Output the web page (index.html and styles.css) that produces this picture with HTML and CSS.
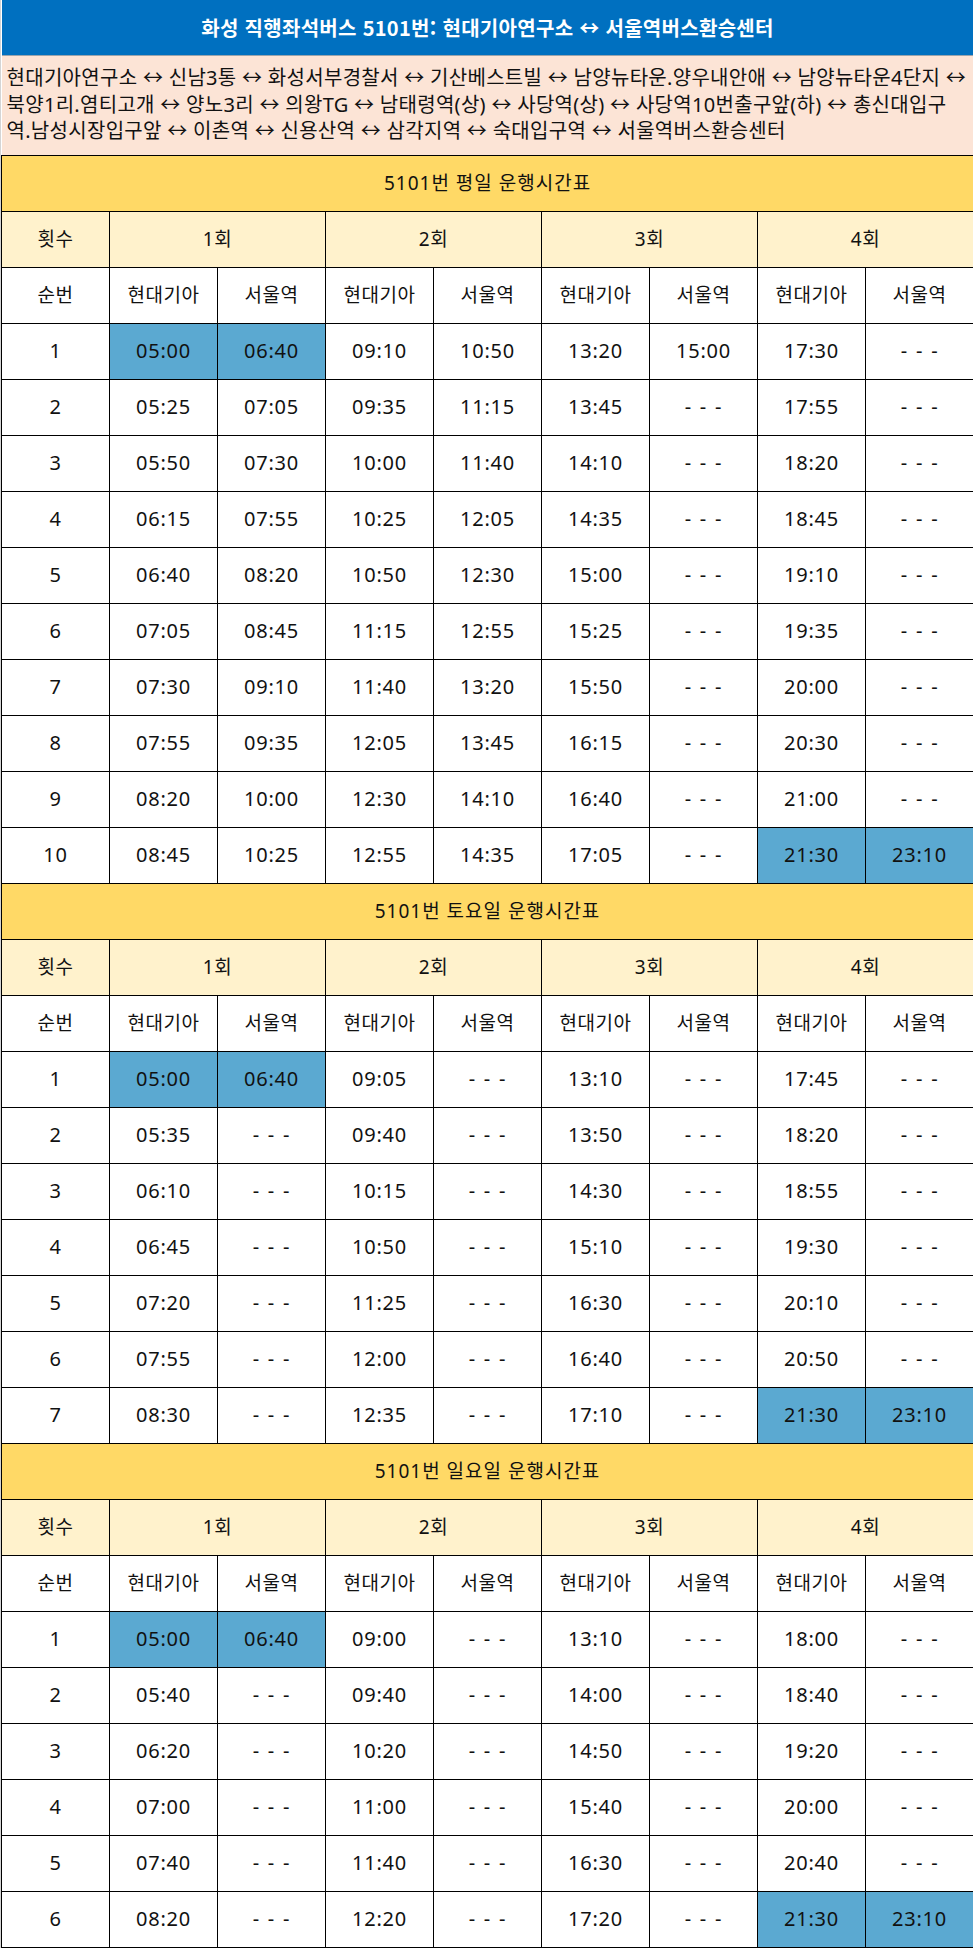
FILE: index.html
```html
<!DOCTYPE html>
<html lang="ko">
<head>
<meta charset="utf-8">
<title>화성 직행좌석버스 5101번</title>
<link rel="stylesheet" href="styles.css">
</head>
<body>
<div class="page">
<table class="tt">
<colgroup>
<col><col><col><col><col><col><col><col><col>
</colgroup>
<tbody>
<tr class="title-row"><td colspan="9">화성 직행좌석버스 5101번: 현대기아연구소 ↔ 서울역버스환승센터</td></tr>
<tr class="route-row"><td colspan="9">현대기아연구소 ↔ 신남3통 ↔ 화성서부경찰서 ↔ 기산베스트빌 ↔ 남양뉴타운.양우내안애 ↔ 남양뉴타운4단지 ↔ 북양1리.염티고개 ↔ 양노3리 ↔ 의왕TG ↔ 남태령역(상) ↔ 사당역(상) ↔ 사당역10번출구앞(하) ↔ 총신대입구역.남성시장입구앞 ↔ 이촌역 ↔ 신용산역 ↔ 삼각지역 ↔ 숙대입구역 ↔ 서울역버스환승센터</td></tr>

<tr class="sec"><td colspan="9">5101번 평일 운행시간표</td></tr>
<tr class="round"><td>횟수</td><td colspan="2">1회</td><td colspan="2">2회</td><td colspan="2">3회</td><td colspan="2">4회</td></tr>
<tr class="hdr"><td>순번</td><td>현대기아</td><td>서울역</td><td>현대기아</td><td>서울역</td><td>현대기아</td><td>서울역</td><td>현대기아</td><td>서울역</td></tr>
<tr><td>1</td><td class="hl">05:00</td><td class="hl">06:40</td><td>09:10</td><td>10:50</td><td>13:20</td><td>15:00</td><td>17:30</td><td>- - -</td></tr>
<tr><td>2</td><td>05:25</td><td>07:05</td><td>09:35</td><td>11:15</td><td>13:45</td><td>- - -</td><td>17:55</td><td>- - -</td></tr>
<tr><td>3</td><td>05:50</td><td>07:30</td><td>10:00</td><td>11:40</td><td>14:10</td><td>- - -</td><td>18:20</td><td>- - -</td></tr>
<tr><td>4</td><td>06:15</td><td>07:55</td><td>10:25</td><td>12:05</td><td>14:35</td><td>- - -</td><td>18:45</td><td>- - -</td></tr>
<tr><td>5</td><td>06:40</td><td>08:20</td><td>10:50</td><td>12:30</td><td>15:00</td><td>- - -</td><td>19:10</td><td>- - -</td></tr>
<tr><td>6</td><td>07:05</td><td>08:45</td><td>11:15</td><td>12:55</td><td>15:25</td><td>- - -</td><td>19:35</td><td>- - -</td></tr>
<tr><td>7</td><td>07:30</td><td>09:10</td><td>11:40</td><td>13:20</td><td>15:50</td><td>- - -</td><td>20:00</td><td>- - -</td></tr>
<tr><td>8</td><td>07:55</td><td>09:35</td><td>12:05</td><td>13:45</td><td>16:15</td><td>- - -</td><td>20:30</td><td>- - -</td></tr>
<tr><td>9</td><td>08:20</td><td>10:00</td><td>12:30</td><td>14:10</td><td>16:40</td><td>- - -</td><td>21:00</td><td>- - -</td></tr>
<tr><td>10</td><td>08:45</td><td>10:25</td><td>12:55</td><td>14:35</td><td>17:05</td><td>- - -</td><td class="hl">21:30</td><td class="hl">23:10</td></tr>

<tr class="sec"><td colspan="9">5101번 토요일 운행시간표</td></tr>
<tr class="round"><td>횟수</td><td colspan="2">1회</td><td colspan="2">2회</td><td colspan="2">3회</td><td colspan="2">4회</td></tr>
<tr class="hdr"><td>순번</td><td>현대기아</td><td>서울역</td><td>현대기아</td><td>서울역</td><td>현대기아</td><td>서울역</td><td>현대기아</td><td>서울역</td></tr>
<tr><td>1</td><td class="hl">05:00</td><td class="hl">06:40</td><td>09:05</td><td>- - -</td><td>13:10</td><td>- - -</td><td>17:45</td><td>- - -</td></tr>
<tr><td>2</td><td>05:35</td><td>- - -</td><td>09:40</td><td>- - -</td><td>13:50</td><td>- - -</td><td>18:20</td><td>- - -</td></tr>
<tr><td>3</td><td>06:10</td><td>- - -</td><td>10:15</td><td>- - -</td><td>14:30</td><td>- - -</td><td>18:55</td><td>- - -</td></tr>
<tr><td>4</td><td>06:45</td><td>- - -</td><td>10:50</td><td>- - -</td><td>15:10</td><td>- - -</td><td>19:30</td><td>- - -</td></tr>
<tr><td>5</td><td>07:20</td><td>- - -</td><td>11:25</td><td>- - -</td><td>16:30</td><td>- - -</td><td>20:10</td><td>- - -</td></tr>
<tr><td>6</td><td>07:55</td><td>- - -</td><td>12:00</td><td>- - -</td><td>16:40</td><td>- - -</td><td>20:50</td><td>- - -</td></tr>
<tr><td>7</td><td>08:30</td><td>- - -</td><td>12:35</td><td>- - -</td><td>17:10</td><td>- - -</td><td class="hl">21:30</td><td class="hl">23:10</td></tr>

<tr class="sec"><td colspan="9">5101번 일요일 운행시간표</td></tr>
<tr class="round"><td>횟수</td><td colspan="2">1회</td><td colspan="2">2회</td><td colspan="2">3회</td><td colspan="2">4회</td></tr>
<tr class="hdr"><td>순번</td><td>현대기아</td><td>서울역</td><td>현대기아</td><td>서울역</td><td>현대기아</td><td>서울역</td><td>현대기아</td><td>서울역</td></tr>
<tr><td>1</td><td class="hl">05:00</td><td class="hl">06:40</td><td>09:00</td><td>- - -</td><td>13:10</td><td>- - -</td><td>18:00</td><td>- - -</td></tr>
<tr><td>2</td><td>05:40</td><td>- - -</td><td>09:40</td><td>- - -</td><td>14:00</td><td>- - -</td><td>18:40</td><td>- - -</td></tr>
<tr><td>3</td><td>06:20</td><td>- - -</td><td>10:20</td><td>- - -</td><td>14:50</td><td>- - -</td><td>19:20</td><td>- - -</td></tr>
<tr><td>4</td><td>07:00</td><td>- - -</td><td>11:00</td><td>- - -</td><td>15:40</td><td>- - -</td><td>20:00</td><td>- - -</td></tr>
<tr><td>5</td><td>07:40</td><td>- - -</td><td>11:40</td><td>- - -</td><td>16:30</td><td>- - -</td><td>20:40</td><td>- - -</td></tr>
<tr><td>6</td><td>08:20</td><td>- - -</td><td>12:20</td><td>- - -</td><td>17:20</td><td>- - -</td><td class="hl">21:30</td><td class="hl">23:10</td></tr>
</tbody>
</table>
</div>
</body>
</html>
```
FILE: styles.css
```css
html, body {
  margin: 0;
  padding: 0;
  background: #ffffff;
}
body {
  font-family: "Noto Sans", "Noto Sans CJK KR", sans-serif;
  color: #111111;
}
.page {
  border-left: 1px solid #d4d4d4;
  width: 972px;
}
.tt {
  border-collapse: collapse;
  width: 972px;
  table-layout: fixed;
}
.tt col {
  width: 108px;
}
.tt td {
  border: 1px solid #000000;
  height: 55px;
  padding: 0;
  text-align: center;
  vertical-align: middle;
  font-size: 20px;
  line-height: 24px;
  letter-spacing: 0.8px;
  word-spacing: 2px;
}
.tt .title-row td {
  background: #0070c0;
  color: #ffffff;
  font-family: "Noto Sans CJK KR", "Noto Sans", sans-serif;
  font-weight: bold;
  font-size: 20px;
  border: none;
  border-bottom: 1px solid #9aa4ad;
  letter-spacing: 0.3px;
  word-spacing: 0;
}
.tt .route-row td {
  background: #fce4d6;
  text-align: left;
  height: auto;
  padding: 9px 4px 10px 5px;
  line-height: 26.5px;
  border-left: none;
  border-top: none;
  letter-spacing: 0.3px;
  word-spacing: 0;
}
.tt .sec td {
  background: #ffd966;
  font-size: 19px;
  letter-spacing: 1px;
  word-spacing: 0;
}
.tt .round td,
.tt .hdr td {
  font-size: 19px;
  letter-spacing: 0.5px;
  word-spacing: 0;
}
.tt .round td {
  background: #fff2cc;
}
.tt td.hl {
  background: #5ba9d1;
}
```
